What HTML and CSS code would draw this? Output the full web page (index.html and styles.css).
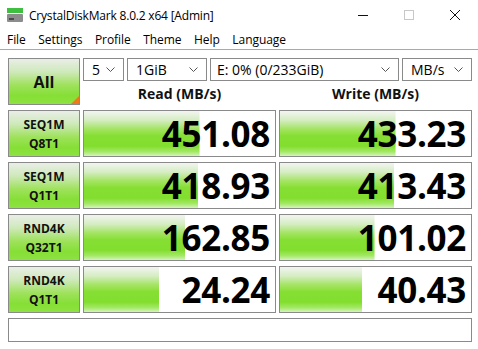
FILE: index.html
```html
<!DOCTYPE html>
<html lang="en">
<head>
  <meta charset="UTF-8" />
  <title>CrystalDiskMark 8.0.2 x64 [Admin]</title>
  <link rel="stylesheet" href="styles.css">
</head>
<body>
  <!-- barra de titulo -->
  <div class="titlebar">
    <svg class="app-icon" width="16" height="16" viewBox="0 0 16 16">
      <rect x="0" y="1" width="16" height="5" fill="#3fbf3f"/>
      <rect x="0" y="7" width="16" height="8" rx="1" fill="#8c8c8c"/>
      <rect x="2" y="11" width="5" height="2" fill="#4a4a4a"/>
    </svg>
    <span class="title">CrystalDiskMark 8.0.2 x64 [Admin]</span>
    <div class="win-btns">
      <svg width="46" height="30" viewBox="0 0 46 30"><line x1="18" y1="15.5" x2="28" y2="15.5" stroke="#111" stroke-width="1"/></svg>
      <svg width="46" height="30" viewBox="0 0 46 30"><rect x="18.5" y="10.5" width="9" height="9" fill="none" stroke="#c8c8c8" stroke-width="1"/></svg>
      <svg width="46" height="30" viewBox="0 0 46 30"><path d="M18 10 L28 20 M28 10 L18 20" stroke="#111" stroke-width="1"/></svg>
    </div>
  </div>

  <div class="menubar">
    <span>File</span>
    <span>Settings</span>
    <span>Profile</span>
    <span>Theme</span>
    <span>Help</span>
    <span>Language</span>
  </div>

  <div class="main">
    <div class="grid">
      <div class="btn all">All<span class="corner"></span></div>
      <div class="top-right">
        <div class="combos">
          <div class="combo c-count"><span>5</span><svg width="9" height="5" viewBox="0 0 9 5"><polyline points="0.5,0.5 4.5,4.5 8.5,0.5" fill="none" stroke="#555"/></svg></div>
          <div class="combo c-size"><span>1GiB</span><svg width="9" height="5" viewBox="0 0 9 5"><polyline points="0.5,0.5 4.5,4.5 8.5,0.5" fill="none" stroke="#555"/></svg></div>
          <div class="combo c-drive"><span>E: 0% (0/233GiB)</span><svg width="9" height="5" viewBox="0 0 9 5"><polyline points="0.5,0.5 4.5,4.5 8.5,0.5" fill="none" stroke="#555"/></svg></div>
          <div class="combo c-unit"><span>MB/s</span><svg width="9" height="5" viewBox="0 0 9 5"><polyline points="0.5,0.5 4.5,4.5 8.5,0.5" fill="none" stroke="#555"/></svg></div>
        </div>
        <div class="heads">
          <div class="head">Read (MB/s)</div>
          <div class="head">Write (MB/s)</div>
        </div>
      </div>

      <div class="btn label">SEQ1M<br>Q8T1</div>
      <div class="cell" style="background-size: 60.5% 100%">451.08</div>
      <div class="cell" style="background-size: 60.5% 100%">433.23</div>

      <div class="btn label">SEQ1M<br>Q1T1</div>
      <div class="cell" style="background-size: 59.8% 100%">418.93</div>
      <div class="cell" style="background-size: 59.8% 100%">413.43</div>

      <div class="btn label">RND4K<br>Q32T1</div>
      <div class="cell" style="background-size: 53% 100%">162.85</div>
      <div class="cell" style="background-size: 49.5% 100%">101.02</div>

      <div class="btn label">RND4K<br>Q1T1</div>
      <div class="cell" style="background-size: 39.5% 100%">24.24</div>
      <div class="cell" style="background-size: 43% 100%">40.43</div>

      <div class="comment"></div>
    </div>
  </div>
</body>
</html>
```
FILE: styles.css
```css
body {
  margin: 0;
  background: #fff;
  font-family: "Open Sans", "Noto Sans", sans-serif;
  color: #000;
  width: 478px;
  height: 349px;
  overflow: hidden;
}

.titlebar {
  height: 30px;
  display: flex;
  align-items: center;
  padding-left: 7px;
}
.app-icon {
  margin-right: 6px;
}
.title {
  font-size: 12px;
  letter-spacing: -0.2px;
  color: #000;
}
.win-btns {
  margin-left: auto;
  display: flex;
}
.win-btns svg {
  display: block;
}

.menubar {
  height: 19px;
  display: flex;
  align-items: center;
  gap: 12.5px;
  padding-left: 7px;
  font-size: 12px;
  letter-spacing: -0.05px;
  border-bottom: 1px solid #a8a8a8;
}

.main {
  padding: 8px 6px 0 8px;
}
.grid {
  display: grid;
  grid-template-columns: 72px 193px 193px;
  grid-auto-rows: 47px;
  column-gap: 3px;
  row-gap: 5px;
}

.btn {
  box-sizing: border-box;
  border: 1px solid #8a8a8a;
  background: linear-gradient(to bottom, #eaeee6 0%, #cfe9bc 28%, #9ee25c 58%, #85df34 82%, #8fe242 100%);
  display: flex;
  align-items: center;
  justify-content: center;
  text-align: center;
  font-weight: 700;
  color: #111;
  position: relative;
}
.all {
  font-size: 16px;
}
.corner {
  position: absolute;
  right: 0;
  bottom: 0;
  width: 0;
  height: 0;
  border-left: 8px solid transparent;
  border-bottom: 8px solid #f07a1a;
}
.label {
  font-size: 12px;
  line-height: 19px;
  padding-top: 1px;
}

.top-right {
  grid-column: 2 / 4;
  display: flex;
  flex-direction: column;
}
.combos {
  display: flex;
  gap: 3px;
  height: 24px;
}
.combo {
  box-sizing: border-box;
  border: 1px solid #8a8a8a;
  background: #fff;
  display: flex;
  align-items: center;
  justify-content: space-between;
  padding: 0 8px 0 8px;
  font-size: 14px;
}
.combo svg {
  display: block;
}
.c-count { width: 41px; }
.c-size { width: 80px; }
.c-drive { width: 189px; padding-left: 6px; }
.c-unit { width: 70px; }

.heads {
  display: flex;
  gap: 3px;
  flex: 1;
}
.head {
  width: 193px;
  text-align: center;
  font-size: 14px;
  font-weight: 700;
  line-height: 23px;
  padding-top: 1px;
  color: #111;
}

.cell {
  box-sizing: border-box;
  border: 1px solid #8a8a8a;
  background-color: #fff;
  background-image: linear-gradient(to bottom, #f3f5f1 0%, #d5edc4 20%, #a4e463 40%, #86df34 55%, #82de2e 78%, #a2e865 90%, #d6f3bd 100%);
  background-repeat: no-repeat;
  display: flex;
  align-items: center;
  justify-content: flex-end;
  padding-right: 5px;
  font-size: 35px;
  font-weight: 700;
  letter-spacing: -0.3px;
  color: #000;
}

.comment {
  grid-column: 1 / 4;
  height: 24px;
  box-sizing: border-box;
  border: 1px solid #8a8a8a;
  background: #fff;
}
```
